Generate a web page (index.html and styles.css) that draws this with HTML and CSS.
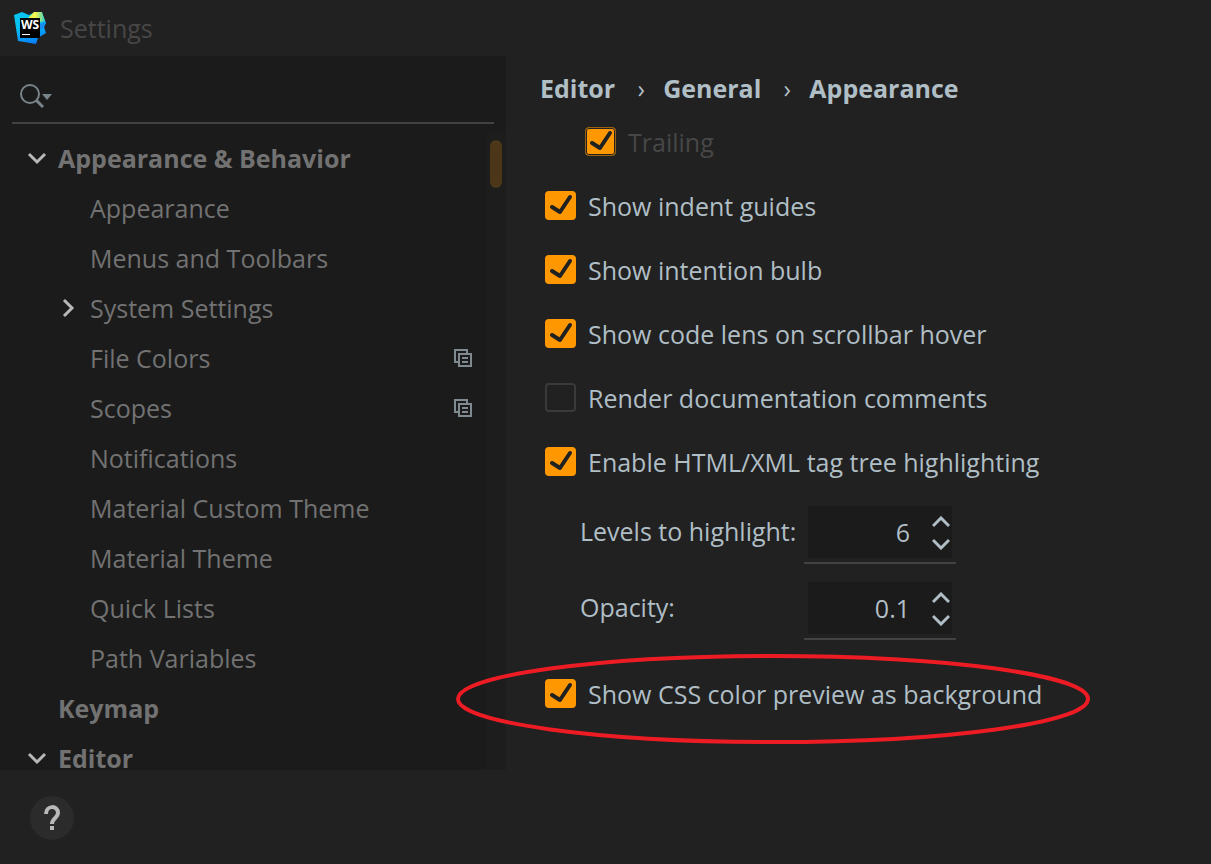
FILE: index.html
```html
<!DOCTYPE html>
<html lang="en">
<head>
<meta charset="utf-8">
<title>Settings</title>
<link rel="stylesheet" href="styles.css">
</head>
<body>
<div class="window">
  <header class="titlebar">
    <svg class="logo" viewBox="0 0 32 32" aria-hidden="true">
      <defs>
        <linearGradient id="lg-blue" x1="0.3" y1="0" x2="0.6" y2="1"><stop offset="0.4" stop-color="#07c3f2"/><stop offset="1" stop-color="#087cfa"/></linearGradient>
        <linearGradient id="lg-yellow" x1="0" y1="0" x2="1" y2="0"><stop offset="0" stop-color="#c8ee50"/><stop offset="0.4" stop-color="#fcf84a"/><stop offset="1" stop-color="#3ccfc0"/></linearGradient>
      </defs>
      <path fill="url(#lg-blue)" d="M0 3L8 0l7 3 6-3 7 1 4 10-2 4 2 6-8 5-2 6-18-3z"/>
      <path fill="url(#lg-yellow)" d="M14 6l6-6h8l3 9-5 1-2-4z"/>
      <path fill="#1a8cf0" d="M26 12l6-2-2 5-4 3z"/>
      <path fill="#000" d="M6 6h20v20H6z"/>
      <path fill="#fff" d="M8 22h8v1H8z"/>
      <text class="logo-text" x="16" y="17" text-anchor="middle">WS</text>
    </svg>
    <h1 class="title">Settings</h1>
  </header>

  <div class="main">
    <aside class="sidebar">
      <div class="search">
        <svg class="search-icon" viewBox="0 0 34 26" aria-hidden="true"><circle cx="10" cy="11" r="9" fill="none" stroke="#78838a" stroke-width="2"/><path d="M16 17l7 7" stroke="#78838a" stroke-width="3"/><path d="M22 11h10l-5 6z" fill="#78838a"/></svg>
        <input class="search-input" type="text" aria-label="Search settings">
      </div>
      <nav class="tree" aria-label="Settings categories">
        <ul class="tree-list">
          <li><a class="node group" href="#"><svg class="arrow" viewBox="0 0 20 20"><path d="M2 6l8 8 8-8"/></svg>Appearance &amp; Behavior</a></li>
          <li><a class="node child" href="#"><span class="arrow"></span>Appearance</a></li>
          <li><a class="node child" href="#"><span class="arrow"></span>Menus and Toolbars</a></li>
          <li><a class="node child" href="#"><svg class="arrow" viewBox="0 0 20 20"><path d="M5 2l8 8-8 8"/></svg>System Settings</a></li>
          <li><a class="node child" href="#"><span class="arrow"></span>File Colors<svg class="scope" viewBox="0 0 18 18"><path d="M13 4V1H1v12h3M5 5h12v12H5zM8 9h6M8 13h6"/></svg></a></li>
          <li><a class="node child" href="#"><span class="arrow"></span>Scopes<svg class="scope" viewBox="0 0 18 18"><path d="M13 4V1H1v12h3M5 5h12v12H5zM8 9h6M8 13h6"/></svg></a></li>
          <li><a class="node child" href="#"><span class="arrow"></span>Notifications</a></li>
          <li><a class="node child" href="#"><span class="arrow"></span>Material Custom Theme</a></li>
          <li><a class="node child" href="#"><span class="arrow"></span>Material Theme</a></li>
          <li><a class="node child" href="#"><span class="arrow"></span>Quick Lists</a></li>
          <li><a class="node child" href="#"><span class="arrow"></span>Path Variables</a></li>
          <li><a class="node group" href="#"><span class="arrow"></span>Keymap</a></li>
          <li><a class="node group" href="#"><svg class="arrow" viewBox="0 0 20 20"><path d="M2 6l8 8 8-8"/></svg>Editor</a></li>
        </ul>
        <div class="track"><div class="thumb"></div></div>
      </nav>
    </aside>

    <main class="content">
      <nav class="breadcrumbs" aria-label="Breadcrumb">
        <a href="#">Editor</a><span class="sep">›</span><a href="#">General</a><span class="sep">›</span><a href="#">Appearance</a>
      </nav>
      <label class="option nested disabled"><span class="box"><input type="checkbox" checked disabled><svg class="tick" viewBox="0 0 31 29"><path d="M7 16l8 5L25 6"/></svg></span>Trailing</label>
      <label class="option"><span class="box"><input type="checkbox" checked><svg class="tick" viewBox="0 0 31 29"><path d="M7 16l8 5L25 6"/></svg></span>Show indent guides</label>
      <label class="option"><span class="box"><input type="checkbox" checked><svg class="tick" viewBox="0 0 31 29"><path d="M7 16l8 5L25 6"/></svg></span>Show intention bulb</label>
      <label class="option"><span class="box"><input type="checkbox" checked><svg class="tick" viewBox="0 0 31 29"><path d="M7 16l8 5L25 6"/></svg></span>Show code lens on scrollbar hover</label>
      <label class="option"><span class="box"><input type="checkbox"><svg class="tick" viewBox="0 0 31 29"><path d="M7 16l8 5L25 6"/></svg></span>Render documentation comments</label>
      <label class="option"><span class="box"><input type="checkbox" checked><svg class="tick" viewBox="0 0 31 29"><path d="M7 16l8 5L25 6"/></svg></span>Enable HTML/XML tag tree highlighting</label>
      <div class="fields">
        <label for="levels">Levels to highlight:</label>
        <div class="spinner">
          <div class="spinner-face">
            <input id="levels" type="text" inputmode="numeric" value="6">
            <div class="steps">
              <button type="button" aria-label="Increase levels"><svg viewBox="0 0 18 12"><path d="M1 10l8-8 8 8"/></svg></button>
              <button type="button" aria-label="Decrease levels"><svg viewBox="0 0 18 12"><path d="M1 2l8 8 8-8"/></svg></button>
            </div>
          </div>
        </div>
        <label for="opacity">Opacity:</label>
        <div class="spinner">
          <div class="spinner-face">
            <input id="opacity" type="text" inputmode="decimal" value="0.1">
            <div class="steps">
              <button type="button" aria-label="Increase opacity"><svg viewBox="0 0 18 12"><path d="M1 10l8-8 8 8"/></svg></button>
              <button type="button" aria-label="Decrease opacity"><svg viewBox="0 0 18 12"><path d="M1 2l8 8 8-8"/></svg></button>
            </div>
          </div>
        </div>
      </div>
      <label class="option"><span class="box"><input type="checkbox" checked><svg class="tick" viewBox="0 0 31 29"><path d="M7 16l8 5L25 6"/></svg></span>Show CSS color preview as background<svg class="ring" viewBox="0 0 634 90" aria-hidden="true"><ellipse cx="317" cy="45" rx="315" ry="43"/></svg></label>
    </main>
  </div>

  <footer class="footer">
    <button class="help" type="button" aria-label="Help"><svg viewBox="0 0 44 44"><path fill="none" stroke="#b8b8b8" stroke-width="4" d="M16 18c0-9 12-9 12-1 0 5-6 5-6 11"/><path fill="#b8b8b8" d="M20 30h4v4h-4z"/></svg></button>
  </footer>
</div>
</body>
</html>
```
FILE: styles.css
```css
* { box-sizing: border-box; }

body {
  margin: 0;
  background: #212121;
  color: #b0bec5;
  font: 25px/32px "Open Sans", "Noto Sans", sans-serif;
}

a { color: inherit; text-decoration: none; }

.window {
  display: grid;
  grid-template-rows: 56px minmax(0, 1fr) 94px;
  height: 100vh;
}

.titlebar {
  display: flex;
  align-items: center;
  gap: 14px;
  padding: 0 14px;
}

.logo { width: 32px; height: 32px; }

.logo-text {
  fill: #fff;
  font: 700 12px "Open Sans", sans-serif;
}

.title {
  margin: 0;
  color: #474747;
  font-size: 25px;
  font-weight: 400;
}

.main { display: flex; min-height: 0; }

.sidebar {
  display: flex;
  flex: 0 0 506px;
  flex-direction: column;
  min-height: 0;
  background: #1b1b1b;
}

.search {
  display: flex;
  align-items: center;
  flex: 0 0 68px;
  gap: 4px;
  margin: 0 12px;
  padding: 14px 8px 0;
  border-bottom: 2px solid #424242;
}

.search-icon { width: 34px; height: 26px; }

.search-input {
  flex: 1;
  min-width: 0;
  border: 0;
  outline: 0;
  background: transparent;
  color: inherit;
  font: inherit;
}

.tree {
  display: flex;
  flex: 1;
  min-height: 0;
  margin-top: 9px;
  overflow: hidden;
}

.tree-list {
  flex: 1;
  margin: 0;
  padding: 0;
  list-style: none;
}

.node {
  display: flex;
  align-items: center;
  gap: 11px;
  height: 50px;
  padding: 0 14px 0 27px;
  color: #727272;
}

.child { padding-left: 59px; }
.group { font-weight: 700; }

.arrow {
  flex: none;
  width: 20px;
  height: 20px;
  fill: none;
  stroke: #b8b8b8;
  stroke-width: 3;
}

.scope {
  width: 18px;
  height: 18px;
  margin-left: auto;
  fill: none;
  stroke: #808b91;
  stroke-width: 2;
}

.track {
  flex: 0 0 20px;
  padding: 7px 4px;
  background: #1d1d1d;
}

.thumb {
  height: 48px;
  border-radius: 6px;
  background: #4b3618;
}

.content {
  flex: 1;
  min-width: 0;
  padding: 14px 0 0 34px;
}

.breadcrumbs {
  display: flex;
  align-items: center;
  height: 40px;
  padding-bottom: 4px;
  font-weight: 700;
}

.sep { width: 48px; padding-left: 4px; text-align: center; font-weight: 400; }

.option {
  position: relative;
  display: flex;
  align-items: center;
  gap: 12px;
  width: fit-content;
  height: 64px;
  padding-left: 5px;
}

.nested { padding-left: 45px; }
.disabled { color: #474747; }

.box {
  position: relative;
  width: 31px;
  height: 29px;
  margin-bottom: 2px;
}

.box input {
  appearance: none;
  display: block;
  width: 100%;
  height: 100%;
  margin: 0;
  border: 2px solid #3a3a3a;
  border-radius: 4px;
}

.box input:checked { border-color: #ff9800; background: #ff9800; }

.box input:disabled {
  border: 1px solid #9a6210;
  box-shadow: inset 0 0 0 1px #212121;
}

.tick {
  position: absolute;
  inset: 0;
  width: 100%;
  height: 100%;
  fill: none;
  stroke: #212121;
  stroke-width: 4;
  stroke-linecap: round;
  stroke-linejoin: round;
}

.box input:not(:checked) + .tick { display: none; }

.fields {
  display: grid;
  grid-template-columns: 224px 152px;
  align-items: center;
  row-gap: 14px;
  padding: 8px 0 22px 40px;
}

.fields label { padding-bottom: 4px; }

.spinner {
  height: 62px;
  padding: 4px;
  border-bottom: 2px solid #424242;
}

.spinner-face {
  display: flex;
  height: 52px;
  background: #1b1b1b;
}

.spinner input {
  flex: 1;
  min-width: 0;
  padding: 0 22px 0 0;
  border: 0;
  outline: 0;
  background: transparent;
  color: inherit;
  font: inherit;
  text-align: right;
}

.steps {
  display: flex;
  flex-direction: column;
  justify-content: center;
  gap: 10px;
  padding: 2px 2px 0 0;
}

.steps button {
  display: block;
  width: 18px;
  height: 12px;
  padding: 0;
  border: 0;
  background: none;
}

.steps svg {
  display: block;
  fill: none;
  stroke: #b0bec5;
  stroke-width: 3;
}

.ring {
  position: absolute;
  left: -84px;
  top: -8px;
  width: 634px;
  height: 90px;
  fill: none;
  stroke: #ed1c24;
  stroke-width: 4;
  pointer-events: none;
}

.footer { display: flex; padding: 26px 30px; }

.help {
  width: 44px;
  height: 44px;
  padding: 0;
  border: 0;
  border-radius: 50%;
  background: #2b2b2b;
}

.help svg { display: block; }
```
